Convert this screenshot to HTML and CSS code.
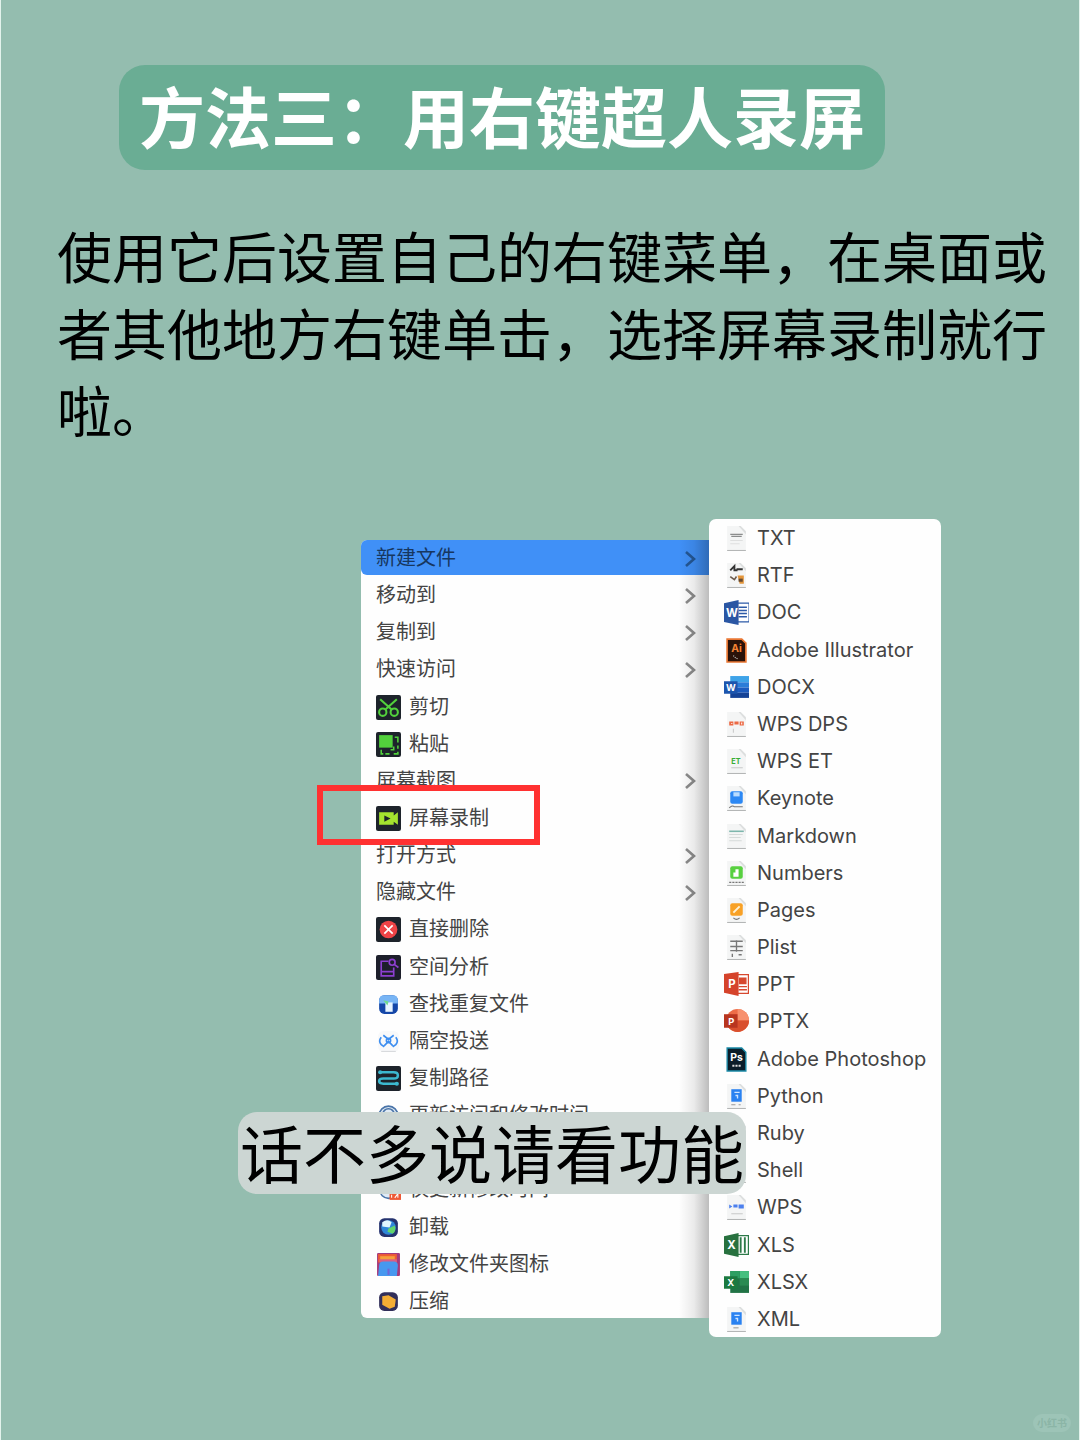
FILE: index.html
```html
<!DOCTYPE html>
<html lang="zh-CN">
<head>
    <meta charset="UTF-8">
    <meta name="viewport" content="width=device-width, initial-scale=1.0">
    <title>方法三：用右键超人录屏</title>
    <link rel="stylesheet" href="styles.css">
</head>
<body>
    <!-- shared icon shapes -->
    <svg class="defs" aria-hidden="true">
        <symbol id="chevron" viewBox="0 0 12 18">
            <path d="M2 2l8 7-8 7" fill="none" stroke="currentColor" stroke-width="2.6"/>
        </symbol>
        <symbol id="sheet" viewBox="0 0 24 24">
            <path d="M3 0h13l5 5v18H3z" fill="#f4f5f5"/>
            <path d="M14 0h2l5 5v3z" fill="#dcdede"/>
            <path d="M3 23.5h18" stroke="#b4b6b6" stroke-width="1"/>
        </symbol>
    </svg>

    <main class="page">
        <h1 class="title">方法三：用右键超人录屏</h1>
        <p class="intro">使用它后设置自己的右键菜单，在桌面或者其他地方右键单击，选择屏幕录制就行啦。</p>

        <div class="stage">
            <ul class="menu">
                <li><button class="item active">新建文件<svg class="chevron"><use href="#chevron"/></svg></button></li>
                <li><button class="item">移动到<svg class="chevron"><use href="#chevron"/></svg></button></li>
                <li><button class="item">复制到<svg class="chevron"><use href="#chevron"/></svg></button></li>
                <li><button class="item">快速访问<svg class="chevron"><use href="#chevron"/></svg></button></li>
                <li><button class="item">
                    <svg class="icon" viewBox="0 0 24 24"><rect width="24" height="24" rx="2" fill="#1d232b"/><g fill="none" stroke="#52d13c" stroke-width="2"><path d="M4 4l11 10M20 4L9 14"/><circle cx="6.500" cy="16.500" r="3.500"/><circle cx="17.500" cy="16.500" r="3.500"/></g></svg>剪切</button></li>
                <li><button class="item">
                    <svg class="icon" viewBox="0 0 24 24"><rect width="24" height="24" rx="2" fill="#1d232b"/><path d="M3 3h13v12H3z" fill="#52d13c"/><path d="M18 5h3v5M21 13v3M21 19v2h-4M13 21H9M5 17v4h2M14 17h3v-3" fill="none" stroke="#52d13c" stroke-width="1.500"/></svg>粘贴</button></li>
                <li><button class="item">屏幕截图<svg class="chevron"><use href="#chevron"/></svg></button></li>
                <li class="marked"><button class="item">
                    <svg class="icon" viewBox="0 0 24 24"><rect width="24" height="24" rx="2" fill="#1d232b"/><path d="M3 6h14v3l4-3v12l-4-3v3H3z" fill="#a4e32f"/><path d="M8 9l6 3-6 3z" fill="#1d232b"/></svg>屏幕录制</button></li>
                <li><button class="item">打开方式<svg class="chevron"><use href="#chevron"/></svg></button></li>
                <li><button class="item">隐藏文件<svg class="chevron"><use href="#chevron"/></svg></button></li>
                <li><button class="item">
                    <svg class="icon" viewBox="0 0 24 24"><rect width="24" height="24" rx="2" fill="#1d232b"/><circle cx="12" cy="12" r="8.500" fill="#ee4346"/><path d="M8 8l8 8M16 8l-8 8" stroke="#fff" stroke-width="1.600"/></svg>直接删除</button></li>
                <li><button class="item">
                    <svg class="icon" viewBox="0 0 24 24"><rect width="24" height="24" rx="2" fill="#1d1f2b"/><g fill="none" stroke="#8c3fd0" stroke-width="1.600"><path d="M12 6H5v14h12v-8M5 16h12"/><circle cx="15.500" cy="7" r="2.800"/><path d="M17.500 9l4 3"/></g></svg>空间分析</button></li>
                <li><button class="item">
                    <svg class="icon" viewBox="0 0 24 24"><rect x="3" y="3" width="18" height="18" rx="5" fill="#1547a8"/><path d="M3 11V8q0-5 5-5h8q5 0 5 5v3z" fill="#78b5f5"/><path d="M9 10h7v9H9z" fill="#e8f5ff"/><path d="M7 8l5 1-1 4z" fill="#6fdc8c"/></svg>查找重复文件</button></li>
                <li><button class="item">
                    <svg class="icon" viewBox="0 0 24 24"><rect x="2" y="2" width="20" height="20" rx="5" fill="#f8f9fa"/><path d="M5 21.500h14" stroke="#d5d7da"/><g fill="none" stroke="#3d8ef0" stroke-width="1.600"><path d="M7 6l5 4 5-4M8 16l4-4 4 4M5 8q-3 4 0 7l3 2M19 8q3 4 0 7l-3 2"/><circle cx="12" cy="11" r="2"/></g></svg>隔空投送</button></li>
                <li><button class="item">
                    <svg class="icon" viewBox="0 0 24 24"><rect width="24" height="24" rx="2" fill="#1d232b"/><path d="M3 6h14q4 0 4 3t-4 3H7q-4 0-4 2.500T7 17h13" fill="none" stroke="#3cb9d0" stroke-width="2.400"/><circle cx="4" cy="6" r="2" fill="#3cb9d0"/><circle cx="20" cy="17" r="2" fill="#3cb9d0"/></svg>复制路径</button></li>
                <li><button class="item">
                    <svg class="icon" viewBox="0 0 24 24"><circle cx="12" cy="12" r="9" fill="#dfeaf5" stroke="#4a74a8" stroke-width="1.500"/><circle cx="12" cy="11" r="5.500" fill="none" stroke="#4a74a8" stroke-width="1.500"/><path d="M9 9v4M12 9v4M15 9v4" stroke="#4a74a8"/></svg>更新访问和修改时间</button></li>
                <li><button class="item">
                    <svg class="icon" viewBox="0 0 24 24"><circle cx="12" cy="12" r="9" fill="#dfeaf5" stroke="#4a74a8" stroke-width="1.500"/></svg></button></li>
                <li><button class="item">
                    <svg class="icon" viewBox="0 0 24 24"><circle cx="12" cy="12" r="8.500" fill="#dfeaf5" stroke="#4a74a8" stroke-width="1.500"/><path d="M13 13h11v9H13z" fill="#ee5936"/><path d="M15 20v-3M18 20l3-4v4" fill="none" stroke="#fff"/></svg>仅更新修改时间</button></li>
                <li><button class="item">
                    <svg class="icon" viewBox="0 0 24 24"><rect x="3" y="3" width="18" height="18" rx="5" fill="#25336f"/><circle cx="12" cy="12" r="7" fill="#2e86d8"/><path d="M6 7q5-4 9 0l-2 5-7-1z" fill="#e1f5ff"/><path d="M12 13l6-3q2 5-2 8l-5-2z" fill="#61d56d"/></svg>卸载</button></li>
                <li><button class="item">
                    <svg class="icon" viewBox="0 0 24 24"><rect x="1" y="1" width="22" height="22" rx="1" fill="#a43b7d"/><path d="M2 8V2h18v8H2z" fill="#ef5c32"/><path d="M4 4h14v4H4z" fill="#f5a03c"/><path d="M3 7h17v3H3z" fill="#db5e83"/><path d="M2 23l1-10q0-4 4-4h10q4 0 4 4l-1 10z" fill="#4798ef"/><path d="M12 16v6" stroke="#7464d5" stroke-width="2"/></svg>修改文件夹图标</button></li>
                <li><button class="item">
                    <svg class="icon" viewBox="0 0 24 24"><rect x="3" y="3" width="18" height="18" rx="5" fill="#322f5a"/><path d="M6 7l6-1 7 4-1 7-5 2-7-4z" fill="#f4ad34"/></svg>压缩</button></li>
            </ul>

            <ul class="menu submenu">
                <li><button class="item"><svg class="icon" viewBox="0 0 24 24"><use href="#sheet"/><path d="M6 8h12M7 10h10" stroke="#8b8d8d" stroke-width="1.300"/><path d="M6 14h12M6 17h9" stroke="#dedfdf"/></svg>TXT</button></li>
                <li><button class="item"><svg class="icon" viewBox="0 0 24 24"><use href="#sheet"/><path d="M6 7l4-4v4h3M12 6h6" fill="none" stroke="#333" stroke-width="1.800"/><path d="M6 13l4 3 2-3" fill="none" stroke="#6b5a4c" stroke-width="1.500"/><path d="M13 12h6v8h-4z" fill="#e3953a"/><path d="M14 15h4v3h-4z" fill="#634a33"/></svg>RTF</button></li>
                <li><button class="item"><svg class="icon" viewBox="0 0 24 24"><path d="M12 3h12v18H12z" fill="#fff" stroke="#2c5aa8"/><path d="M14 7h8M14 10h8M14 13h8M14 16h8" stroke="#2c5aa8" stroke-width="1.500"/><path d="M0 3l14-3v24L0 21z" fill="#2a56a3"/><text x="2" y="16" font-size="11" class="mark">W</text></svg>DOC</button></li>
                <li><button class="item"><svg class="icon" viewBox="0 0 24 24"><path d="M3 1h14l4 4v18H3z" fill="#2a1209" stroke="#e97632" stroke-width="1.600"/><text x="7" y="13" font-size="10" class="mark ai">Ai</text><path d="M9 17l2 2 2 1" stroke="#ddd" stroke-dasharray="1 1"/></svg>Adobe Illustrator</button></li>
                <li><button class="item"><svg class="icon" viewBox="0 0 24 24"><path d="M6 1h18v6H6z" fill="#3ea3e8"/><path d="M6 7h18v5H6z" fill="#2b7cd8"/><path d="M6 12h18v5H6z" fill="#1c5bbf"/><path d="M6 17h18v5H6z" fill="#154397"/><path d="M0 6h13v12H0z" fill="#1c55ad"/><text x="2" y="15" font-size="9" class="mark">W</text></svg>DOCX</button></li>
                <li><button class="item"><svg class="icon" viewBox="0 0 24 24"><use href="#sheet"/><path d="M5 9h4v4H5zM10 9h4v3h-4zM15 9h4v4h-4z" fill="#ec6944"/><path d="M7 11h1M17 10v2" stroke="#fff"/><path d="M9 16v4" stroke="#c9caca"/></svg>WPS DPS</button></li>
                <li><button class="item"><svg class="icon" viewBox="0 0 24 24"><use href="#sheet"/><text x="7" y="14" font-size="7" class="mark et">ET</text><path d="M7 18h11" stroke="#c9caca"/></svg>WPS ET</button></li>
                <li><button class="item"><svg class="icon" viewBox="0 0 24 24"><use href="#sheet"/><rect x="6" y="5" width="12" height="12" rx="2" fill="#2c88f4"/><path d="M9 6h6v4H9z" fill="#b9dcff"/><path d="M5 21q3-3 5-1h8" fill="none" stroke="#777"/></svg>Keynote</button></li>
                <li><button class="item"><svg class="icon" viewBox="0 0 24 24"><use href="#sheet"/><path d="M5 7h14" stroke="#7db6ac" stroke-width="1.500"/><path d="M5 10h13M5 13h11M5 16h12" stroke="#d5dad9"/></svg>Markdown</button></li>
                <li><button class="item"><svg class="icon" viewBox="0 0 24 24"><use href="#sheet"/><rect x="6" y="5" width="12" height="12" rx="2" fill="#58d040"/><path d="M9 15v-4h2V8h3v7z" fill="#fff"/><path d="M5 20.500h14" stroke="#777" stroke-dasharray="2 1"/></svg>Numbers</button></li>
                <li><button class="item"><svg class="icon" viewBox="0 0 24 24"><use href="#sheet"/><rect x="6" y="5" width="12" height="12" rx="2" fill="#f8a126"/><path d="M9 14l6-6" stroke="#fff2d5" stroke-width="1.800"/><path d="M9 19q3 3 6 0" fill="none" stroke="#777"/></svg>Pages</button></li>
                <li><button class="item"><svg class="icon" viewBox="0 0 24 24"><use href="#sheet"/><path d="M6 6h12M6 11h12M6 15h12M12 5v11M8 18v3M14 19h3" stroke="#777" stroke-width="1.300"/></svg>Plist</button></li>
                <li><button class="item"><svg class="icon" viewBox="0 0 24 24"><path d="M12 2.500h11.500v18H12z" fill="#fff" stroke="#d7482f" stroke-width="1.300"/><path d="M15 6h6v5h-6zM14 14h8M14 17h8" fill="#d7482f" stroke="#d7482f" stroke-width="1.300"/><path d="M0 2l14-2v23L0 20z" fill="#d5432b"/><text x="4" y="15" font-size="11" class="mark">P</text></svg>PPT</button></li>
                <li><button class="item"><svg class="icon" viewBox="0 0 24 24"><circle cx="13" cy="11" r="11" fill="#ed6c47"/><path d="M13 0a11 11 0 0 1 11 11H13z" fill="#f7906d"/><path d="M2 11h22a11 11 0 0 1-22 0z" fill="#d9502e"/><path d="M0 5h13v13H0z" fill="#b8351f"/><text x="4" y="15" font-size="9" class="mark">P</text></svg>PPTX</button></li>
                <li><button class="item"><svg class="icon" viewBox="0 0 24 24"><path d="M3 1h14l4 4v18H3z" fill="#0b1d29" stroke="#1b8ba8" stroke-width="1.300"/><text x="6" y="13" font-size="10" class="mark">Ps</text><path d="M8 18h8" stroke="#ddd" stroke-width="2" stroke-dasharray="2 1"/></svg>Adobe Photoshop</button></li>
                <li><button class="item"><svg class="icon" viewBox="0 0 24 24"><use href="#sheet"/><path d="M7 5h10v12H7z" fill="#2a82f1"/><path d="M10 8h5M11 11h2v3" fill="none" stroke="#cfe5ff" stroke-width="1.300"/><path d="M7 20h4M14 20h2" stroke="#999"/></svg>Python</button></li>
                <li><button class="item"><svg class="icon" viewBox="0 0 24 24"><use href="#sheet"/></svg>Ruby</button></li>
                <li><button class="item"><svg class="icon" viewBox="0 0 24 24"><use href="#sheet"/></svg>Shell</button></li>
                <li><button class="item"><svg class="icon" viewBox="0 0 24 24"><use href="#sheet"/><path d="M5 9l3 2-3 2zM9 9h4v3H9zM14 9h5v4h-5z" fill="#4c80ee"/><path d="M7 18h11" stroke="#c9caca"/></svg>WPS</button></li>
                <li><button class="item"><svg class="icon" viewBox="0 0 24 24"><path d="M12 2.500h11.500v18H12z" fill="#fff" stroke="#2d7a49" stroke-width="1.300"/><path d="M16 4v15M20 4v15" stroke="#2d7a49" stroke-width="1.800"/><path d="M0 3l14-3v23L0 20z" fill="#28713f"/><text x="3" y="15" font-size="11" class="mark">X</text></svg>XLS</button></li>
                <li><button class="item"><svg class="icon" viewBox="0 0 24 24"><path d="M6 1h18v21H6z" fill="#217346"/><path d="M15 1h9v7h-9z" fill="#46c07f"/><path d="M6 1h9v7H6z" fill="#2e9f62"/><path d="M15 8h9v7h-9z" fill="#2a8a52"/><path d="M0 6h13v12H0z" fill="#1c7a40"/><text x="3" y="15" font-size="9" class="mark">X</text></svg>XLSX</button></li>
                <li><button class="item"><svg class="icon" viewBox="0 0 24 24"><use href="#sheet"/><path d="M7 5h10v12H7z" fill="#2a82f1"/><path d="M10 8h5M11 11h2v3" fill="none" stroke="#cfe5ff" stroke-width="1.300"/><path d="M9 20h5" stroke="#999"/></svg>XML</button></li>
            </ul>

            <div class="caption">话不多说请看功能</div>
        </div>
        <span class="watermark">小红书</span>
    </main>
</body>
</html>
```

FILE: styles.css
```css
*,
*::after {
    box-sizing: border-box;
}
body {
    margin: 0;
    background: #94bdaf;
    border: solid #e3f3ec;
    border-width: 0 1px;
    font-family: Inter, "Noto Sans CJK SC", sans-serif;
}
.defs {
    display: none;
}
.page {
    position: relative;
    min-height: 100vh;
    padding: 65px 20px 103px 56px;
}
.title {
    width: fit-content;
    margin: 0 0 0 62px;
    padding: 4px 20px 0;
    border-radius: 26px;
    background: #6aad94;
    color: #fff;
    font-size: 66px;
    font-weight: 700;
    line-height: 101px;
}
.intro {
    margin: 50px 0 68px;
    color: #000;
    font-size: 55px;
    line-height: 77px;
}
.stage {
    position: relative;
    display: flex;
    align-items: flex-start;
    margin-left: 304px;
}

/* menus */
.menu {
    position: relative;
    display: flex;
    flex-direction: column;
    justify-content: space-between;
    width: 348px;
    min-height: 778px;
    margin: 21px 0 0;
    padding: 0;
    border-radius: 6px 0 0 6px;
    background: #fefefe;
    list-style: none;
}
/* shade cast by the submenu */
.menu:not(.submenu)::after {
    content: "";
    position: absolute;
    top: 0;
    right: 0;
    bottom: 0;
    width: 30px;
    background: linear-gradient(to right, transparent, rgba(0, 0, 0, 0.08) 50%, rgba(0, 0, 0, 0.26));
    pointer-events: none;
}
.submenu {
    width: 232px;
    min-height: 818px;
    margin: 0;
    padding: 1px 0;
    border-radius: 7px;
}
.item {
    display: flex;
    align-items: center;
    gap: 8px;
    width: 100%;
    height: 35px;
    padding: 2px 13px 0 15px;
    border: none;
    background: none;
    color: #444;
    font-family: inherit;
    font-size: 20px;
    line-height: 33px;
    white-space: nowrap;
    cursor: pointer;
}
.item.active {
    border-radius: 6px 0 0 6px;
    background: #4090f7;
    color: #17375f;
}
.icon {
    flex: none;
    width: 25px;
    height: 25px;
}
.chevron {
    width: 12px;
    height: 18px;
    margin-left: auto;
    color: #8c8c8c;
}
.active .chevron {
    color: #245795;
}
.mark {
    fill: #fff;
    font-weight: 700;
}
.mark.ai {
    fill: #f58233;
}
.mark.et {
    fill: #37ad35;
}

/* red frame round the recording entry */
.marked {
    position: relative;
}
.marked::after {
    content: "";
    position: absolute;
    top: -15px;
    left: -44px;
    width: 223px;
    height: 60px;
    border: 6px solid #ff3131;
    pointer-events: none;
}
.caption {
    position: absolute;
    bottom: 143px;
    left: -123px;
    padding: 4px 2px 0;
    border-radius: 19px;
    background: #ccd6d3;
    color: #000;
    font-size: 63px;
    line-height: 78px;
    white-space: nowrap;
}
.watermark {
    position: absolute;
    right: 8px;
    bottom: 8px;
    padding: 0 4px;
    border-radius: 9px;
    background: #9dc4b7;
    color: #8bb5a6;
    font-size: 10px;
    font-weight: 700;
    line-height: 18px;
}
```
